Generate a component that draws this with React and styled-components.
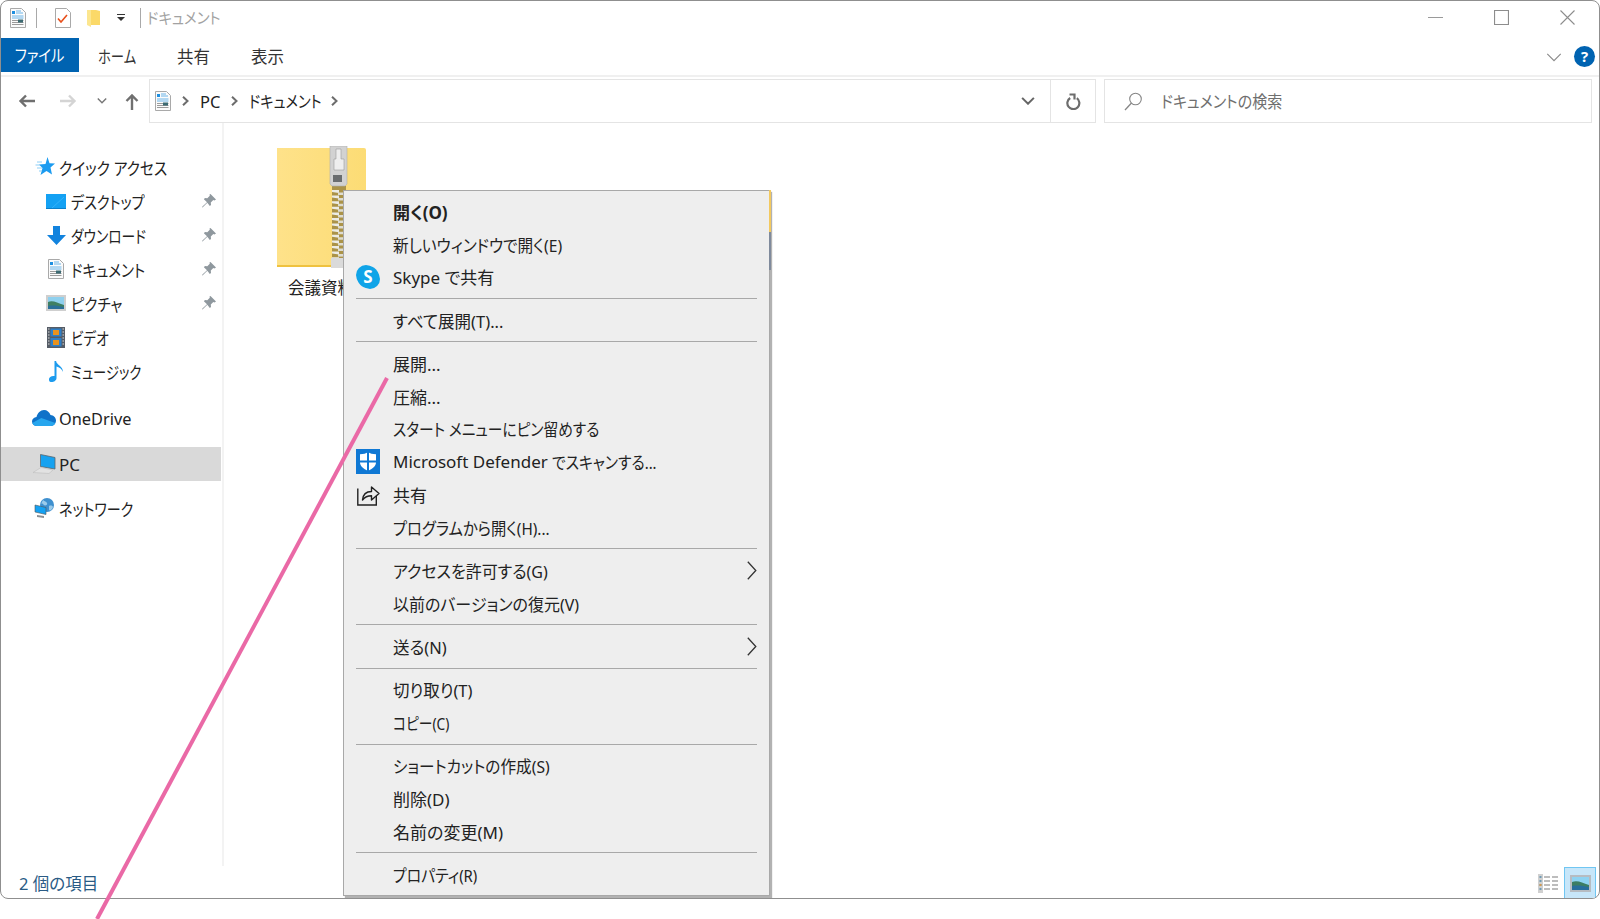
import React from "react";
import styled, { createGlobalStyle } from "styled-components";

const Global = createGlobalStyle`
  html, body { margin: 0; padding: 0; background: #fff; overflow: hidden; }
  body {
    font-family: "Noto Sans", "Noto Sans CJK JP", sans-serif;
    font-size: 17px;
    color: #222;
    font-feature-settings: "palt";
  }
  #root { width: 1600px; height: 919px; position: relative; overflow: hidden; }
`;

const Label = styled.span`
  display: inline-block; white-space: pre; flex: none;
  transform: scaleX(${p => p.$sx || 1});
  transform-origin: ${p => p.$center ? "center" : "left"} center;
`;
const Win = styled.div`
  position: relative; box-sizing: border-box;
  width: 1600px; height: 899px;
  border: 1px solid #8f8f8f; border-radius: 8px;
  display: flex; flex-direction: column; overflow: hidden; background: #fff;
`;
const TitleBar = styled.div`
  height: 37px; flex: none; display: flex; align-items: center; padding: 0 0 4px 9px; box-sizing: border-box;
`;
const QuickIcon = styled.span`
  display: inline-flex; flex: none; margin-left: ${p => p.$ml || 0}px;
`;
const TitleSep = styled.span`
  flex: none; width: 1px; height: 20px; background: #a9a9a9; margin-left: ${p => p.$ml}px;
`;
const TitleText = styled.span`
  margin-left: 6px; color: #a2a2a2; font-size: 15.5px; display: inline-flex;
`;
const WinControls = styled.div`
  margin-left: auto; display: flex; align-items: center; gap: 51px; padding-right: 24px;
`;
const TabRow = styled.div`
  height: 34px; flex: none; display: flex; align-items: center; position: relative;
`;
const FileTab = styled.div`
  width: 78px; height: 34px; background: #0063b1; color: #fff; display: flex; align-items: center; justify-content: center; font-size: 16.5px;
`;
const Tab = styled.div`
  width: ${p => p.$w}px; box-sizing: border-box; padding-left: ${p => p.$pl || 20}px; color: #333; font-size: 16.5px; line-height: 34px; position: relative; top: 2px;
`;
const TabRight = styled.div`
  margin-left: auto; display: flex; align-items: center; gap: 12px; padding: 2px 4px 0 0;
`;
const TabChevron = styled.span`
  display: inline-flex; margin-top: 3px;
`;
const Help = styled.div`
  width: 21px; height: 21px; border-radius: 50%; background: #0063b1; color: #fff; font-size: 15px; font-weight: 700;
  display: flex; align-items: center; justify-content: center;
`;
const Rule = styled.div`
  height: 2px; flex: none; background: #f0f0f0; margin-top: 3px;
`;
const AddressRow = styled.div`
  height: 44px; flex: none; margin-top: 2px; display: flex; align-items: stretch; padding-right: 7px;
`;
const NavBtns = styled.div`
  width: 148px; flex: none; display: flex; align-items: center; position: relative;
`;
const NavIcon = styled.span`
  display: inline-flex; margin-left: ${p => p.$ml}px;
`;
const AddressBox = styled.div`
  width: 947px; box-sizing: border-box; flex: none; border: 1px solid #e4e4e4; display: flex; align-items: center;
`;
const Crumbs = styled.div`
  flex: 1; display: flex; align-items: center; padding-left: 5px; height: 100%;
`;
const CrumbGap = styled.span`
  width: 11px; flex: none;
`;
const Crumb = styled.span`
  width: ${p => p.$w}px; flex: none; margin: 0 11px; color: #222; font-size: 16.5px;
`;
const AddrBtn = styled.div`
  flex: none; width: ${p => p.$w}px; height: 100%; display: flex; align-items: center; justify-content: center;
  ${p => p.$line && "border-left: 1px solid #e4e4e4;"}
`;
const SearchBox = styled.div`
  flex: 1; margin-left: 8px; box-sizing: border-box; border: 1px solid #e4e4e4; display: flex; align-items: center; padding-left: 19px; gap: 18px;
  color: #6f6f6f; font-size: 16.5px;
`;
const Body = styled.div`
  flex: 1; display: flex; min-height: 0;
`;
const Side = styled.nav`
  width: 223px; flex: none; box-sizing: border-box; border-right: 2px solid #f3f3f3; padding-top: 27px;
`;
const SideRow = styled.div`
  height: 34px; width: 220px; box-sizing: border-box; display: flex; align-items: center;
  padding-left: ${p => p.$sub ? 45 : 31}px;
  margin-top: ${p => p.$mt || 0}px;
  background: ${p => p.$active ? "#d9d9d9" : "transparent"};
  font-size: 17px;
`;
const SideIcon = styled.span`
  width: ${p => p.$sub ? 20 : 24}px; flex: none; display: inline-flex; justify-content: center; align-items: center; margin-right: ${p => p.$sub ? 5 : 3}px;
`;
const Pin = styled.span`
  margin-left: auto; margin-right: 5px; display: inline-flex;
`;
const Files = styled.div`
  flex: 1; padding: 23px 0 0 53px; position: relative;
`;
const FileItem = styled.div`
  width: 89px; position: relative;
`;
const FileName = styled.div`
  margin-top: 8px; padding-left: 11px; font-size: 16.5px; color: #222; white-space: nowrap; line-height: 24px;
`;
const Status = styled.div`
  height: 32px; flex: none; display: flex; align-items: center; padding: 2px 3px 0 18px; box-sizing: border-box; color: #2a5b85; font-size: 16.5px; position: relative;
`;
const StatusRight = styled.div`
  margin-left: auto; display: flex; align-items: flex-end; gap: 6px; height: 100%;
`;
const ViewBtn = styled.div`
  width: 32px; height: 32px; box-sizing: border-box; background: #c7e6f9; border: 1px solid #70c6f2; border-bottom: 0;
  display: flex; align-items: center; justify-content: center; margin-bottom: -1px;
`;
const ListIcon = styled.span`
  display: inline-flex; margin-bottom: 5px;
`;
const Menu = styled.div`
  position: absolute; left: 342px; top: 189px; width: 427px; box-sizing: border-box;
  background: #eeeeee; border: 1px solid #a8a8a8; padding: 4px 0 4px;
  box-shadow: 2px 2px 1px rgba(0,0,0,0.3); z-index: 2;
  &::after {
    content: ""; position: absolute; left: 100%; top: -1px; width: 2px; height: 80px;
    background: linear-gradient(#f3c95f 0 53%, #7f8a9c 53%);
  }
`;
const MenuRow = styled.div`
  height: 32.8px; display: flex; align-items: center; padding: 0 12px;
  font-weight: ${p => p.$bold ? 700 : 400}; font-size: 17px; color: #222;
`;
const MenuIcon = styled.span`
  width: 24px; flex: none; display: inline-flex; justify-content: center; align-items: center; margin-right: 13px; height: 26px;
`;
const Sub = styled.span`
  margin-left: auto; display: inline-flex;
`;
const MenuSep = styled.div`
  height: 1px; background: #a8a8a8; margin: 4.7px 12px;
`;
const SkypeS = styled.span`
  width: 22px; height: 22px; border-radius: 50%; background: #10a4e8; color: #fff; font-weight: 700; font-size: 17px;
  display: flex; align-items: center; justify-content: center; box-shadow: -2px -2px 0 -1px #10a4e8, 2px 2px 0 -1px #10a4e8;
`;
const Overlay = styled.svg`
  position: absolute; left: 0; top: 0; pointer-events: none; z-index: 5;
`;

const Doc = ({ s = 20 }) => (
  <svg width={s * 0.8} height={s} viewBox="0 0 16 20">
    <path d="M.5.5h11l4 4v15H.5z" fill="#fbfbfb" stroke="#a9a9a9" />
    <path d="M2 3h3v3H2z" fill="#1e8fe0" />
    <path d="M6 3h5M6 5h7M2 8h11.500M2 10h11.500" stroke="#6ab4e8" />
    <path d="M2 12.500h11.500M2 14.500h11.500M2 16.500h11.500" stroke="#9a9a9a" />
    <path d="M8 11.500h5v3H8z" fill="#3b6a72" />
  </svg>
);
const CheckDoc = () => (
  <svg width="16" height="20" viewBox="0 0 16 20">
    <path d="M.5.5h11l4 4v15H.5z" fill="#fff" stroke="#a9a9a9" />
    <path d="M3 10.500l3 3.500 6-7" fill="none" stroke="#e8501c" strokeWidth="1.600" />
  </svg>
);
const SmallFolder = () => (
  <svg width="14" height="20" viewBox="0 0 14 20">
    <path d="M0 2h9l4 1v14H0z" fill="#fbd968" />
    <path d="M0 2h4v17l-4-2z" fill="#fce68f" />
  </svg>
);
const DropMark = () => (
  <svg width="8" height="8" viewBox="0 0 8 8">
    <path d="M0 0h8v1H0zM0 3h8L4 7z" fill="#333" />
  </svg>
);
const Close = () => (
  <svg width="15" height="15" viewBox="0 0 15 15"><path d="M.5.5l14 14M14.500.5l-14 14" stroke="#8d8d8d" strokeWidth="1.100" /></svg>
);
const Max = () => (
  <svg width="15" height="15" viewBox="0 0 15 15"><path d="M.5.5h14v14H.5z" fill="none" stroke="#8d8d8d" strokeWidth="1.200" /></svg>
);
const Min = () => (
  <svg width="15" height="15" viewBox="0 0 15 15"><path d="M0 7.500h15" stroke="#9a9a9a" strokeWidth="1.200" /></svg>
);
const Chev = ({ c = "#8a8a8a", w = 1.2, s = 16 }) => (
  <svg width={s} height={s * 0.6} viewBox="0 0 16 10"><path d="M1 1l7 7 7-7" fill="none" stroke={c} strokeWidth={w} /></svg>
);
const ArrowLeft = ({ c }) => (
  <svg width="17" height="14" viewBox="0 0 17 14"><path d="M17 7H3M8 1.500L2.500 7 8 12.500" fill="none" stroke={c} strokeWidth="2.400" /></svg>
);
const ArrowRight = ({ c }) => (
  <svg width="17" height="14" viewBox="0 0 17 14"><path d="M0 7h14M9 1.500L14.500 7 9 12.500" fill="none" stroke={c} strokeWidth="2.400" /></svg>
);
const ArrowUp = () => (
  <svg width="14" height="17" viewBox="0 0 14 17"><path d="M7 17V3M1.500 8L7 2.500 12.500 8" fill="none" stroke="#707070" strokeWidth="2.400" /></svg>
);
const Crumbsep = () => (
  <svg width="7" height="10" viewBox="0 0 7 10" style={{ flex: "none" }}><path d="M1 .8L5.500 5 1 9.200" fill="none" stroke="#6d6d6d" strokeWidth="2" /></svg>
);
const Refresh = () => (
  <svg width="15" height="17" viewBox="0 0 15 17">
    <path d="M10.800 5.200A6 6 0 1 1 4.200 5" fill="none" stroke="#6d6d6d" strokeWidth="2.200" />
    <path d="M3.500 1.500h5v5" fill="none" stroke="#6d6d6d" strokeWidth="2.200" />
  </svg>
);
const Magnify = () => (
  <svg width="19" height="19" viewBox="0 0 19 19">
    <circle cx="11.500" cy="7" r="5.800" fill="none" stroke="#868686" strokeWidth="1.100" />
    <path d="M7.500 11L1 18" stroke="#868686" strokeWidth="1.300" />
  </svg>
);
const Star = () => (
  <svg width="21" height="20" viewBox="0 0 21 20">
    <path d="M13.500 0l2 6.300 5.500.3-4.500 4 1.500 7-5.500-3.500-6 3.800 2-7-3.500-3.500 6.500-.3z" fill="#1b9bf0" />
    <path d="M3 5h5M1.500 8H6M3 11h5M5 14h3" stroke="#8ed0f7" strokeWidth="1.200" />
  </svg>
);
const Desktop = () => (
  <svg width="20" height="15" viewBox="0 0 20 15">
    <path d="M0 0h20v14H0z" fill="#14a1f3" />
    <path d="M0 14h20v1H0z" fill="#0b7fca" />
    <path d="M6 14L18 3" stroke="#36b2f7" />
  </svg>
);
const Download = () => (
  <svg width="19" height="19" viewBox="0 0 19 19">
    <path d="M6 0h7v9h6l-9.500 10L0 9h6z" fill="#1283de" />
  </svg>
);
const Picture = () => (
  <svg width="20" height="16" viewBox="0 0 20 16">
    <path d="M0 0h20v16H0z" fill="#cfcfcf" />
    <path d="M2 2h16v12H2z" fill="#8fd0ee" />
    <path d="M2 7c5-2 9 1 16 3v4H2z" fill="#3f7f63" />
    <path d="M2 11c6-1 10 0 16 1v2H2z" fill="#2a6f99" />
  </svg>
);
const Film = () => (
  <svg width="18" height="21" viewBox="0 0 18 21">
    <path d="M0 0h18v21H0z" fill="#555c66" />
    <path d="M3.500 1.500h11v8h-11z" fill="#2d7fc8" />
    <path d="M3.500 11h11v8.500h-11z" fill="#2d7fc8" />
    <path d="M6 3h6v5H6z M6 13h6v5H6z" fill="#e8921f" />
    <path d="M1 2h1.500M1 5h1.500M1 8h1.500M1 11h1.500M1 14h1.500M1 17h1.500M15.500 2H17M15.500 5H17M15.500 8H17M15.500 11H17M15.500 14H17M15.500 17H17" stroke="#d8d8d8" />
  </svg>
);
const Note = () => (
  <svg width="14" height="21" viewBox="0 0 14 21">
    <path d="M5.500 0h1.600c.4 4 6.900 5 6.900 11-1-3-4-5-6.500-5.500V17c0 2.500-2.500 4-5 4S0 19.500 0 18c0-2 2.500-3.500 5.500-3z" fill="#1c9bee" />
  </svg>
);
const Cloud = () => (
  <svg width="24" height="16" viewBox="0 0 24 16">
    <path d="M5 16C2 16 0 14 0 11.500S2 7.200 4.500 7C5.500 3 8.500 0 12 0c3 0 5.500 2 6.500 5 3 .3 5.500 2.500 5.500 5.500S21.500 16 19 16z" fill="#0f72c9" />
    <path d="M5 16c-2.500 0-4-1-4.700-3l9-5 14 5c-.7 2-2.500 3-4.300 3z" fill="#27a6ee" />
  </svg>
);
const Laptop = () => (
  <svg width="23" height="20" viewBox="0 0 23 20">
    <path d="M7.500 0.500l14.500 3v11.500L7.500 12.500z" fill="#17a2f0" stroke="#5c666c" strokeWidth=".8" />
    <path d="M0 18.500l8-5 12 2.500-4 3.500z" fill="#e2e2e2" stroke="#bdbdbd" strokeWidth=".6" />
  </svg>
);
const Globe = () => (
  <svg width="21" height="20" viewBox="0 0 21 20">
    <circle cx="13" cy="7" r="7" fill="#3f90cf" />
    <path d="M9 2c2 2 3 1 4 3s-2 3-3 2-2-2-3-1zM15 8c2-1 4 0 4 1-1 3-3 4-4 3z" fill="#9ccbea" />
    <path d="M1 7l11 2.500v7l-11-2.500z" fill="#14a1f3" stroke="#555" strokeWidth=".6" />
    <path d="M3 17l7 1v2l-7-1z" fill="#8a8f94" />
  </svg>
);
const PinI = () => (
  <svg width="14" height="14" viewBox="0 0 14 14">
    <path d="M8.500 0L14 5.500l-1.500 1-1.200-.4-2.500 2.500.2 2.400-1.200 1L5.300 8.700 1 13l-1 .8.400-1.200L5 8.200 1.900 5.300l1-1.200 2.400.2 2.500-2.500-.3-1.200z" fill="#8f989e" />
  </svg>
);
const Shield = () => (
  <svg width="24" height="25" viewBox="0 0 24 25">
    <path d="M0 0h24v25H0z" fill="#0f78d4" />
    <path d="M12 3c2 1.500 4.500 2.200 8 2.300v8c0 4-3.500 6.500-8 8.700-4.500-2.200-8-4.700-8-8.700v-8C7.500 5.200 10 4.500 12 3z" fill="#fff" />
    <path d="M11 3h2v19h-2zM4 11.500h16v2H4z" fill="#0f78d4" />
  </svg>
);
const Share = () => (
  <svg width="23" height="22" viewBox="0 0 23 22">
    <path d="M.8 4.500v16.500h18.500V12" fill="none" stroke="#222" strokeWidth="1.400" />
    <path d="M5.500 16c.5-5.500 4-8.500 9-8.500V3L22 9.500 14.500 16v-4.200c-4 0-6.500 1-9 4.200z" fill="none" stroke="#222" strokeWidth="1.400" strokeLinejoin="round" />
  </svg>
);
const SubArrow = () => (
  <svg width="10" height="19" viewBox="0 0 10 19"><path d="M.8.800l8 8.700-8 8.700" fill="none" stroke="#333" strokeWidth="1.300" /></svg>
);
const Details = () => (
  <svg width="20" height="19" viewBox="0 0 20 19">
    <path d="M0 0h5v19H0z" fill="#d0d0d0" />
    <path d="M1.500 2h2v2h-2zM1.500 6h2v2h-2zM1.500 10h2v2h-2zM1.500 14h2v2h-2z" fill="#6e9ab5" />
    <path d="M1.500 10h2v2h-2z" fill="#d99a4a" />
    <path d="M6 3h6M14 3h6M6 7h6M14 7h6M6 11h6M14 11h6M6 15h6M14 15h6" stroke="#a8a8a8" strokeWidth="1.400" />
  </svg>
);
const LargeIcons = () => (
  <svg width="21" height="17" viewBox="0 0 21 17">
    <path d="M0 0h21v17H0z" fill="#b6bcc2" />
    <path d="M2 2h17v13H2z" fill="#8ed3f2" />
    <path d="M2 7c6-2 10 1 17 3v5H2z" fill="#3c7d63" />
    <path d="M2 11c6-1 11 0 17 1v3H2z" fill="#286e9c" />
  </svg>
);
const Teeth = () => {
  const r = [];
  for (let i = 0; i < 14; i++) {
    r.push(<path key={"a" + i} d={`M55 ${44 + i * 5.600}h7v3l-7 -1z`} fill="#ecece6" />);
    r.push(<path key={"b" + i} d={`M61 ${46.500 + i * 5.600}h8v2.500h-8z`} fill="#dedcd0" />);
  }
  return r;
};
const Zip = () => (
  <svg width="89" height="122" viewBox="0 0 89 122" style={{ display: "block" }}>
    <defs>
      <linearGradient id="fg" x1="0" y1="0" x2="1" y2="0">
        <stop offset="0" stopColor="#fee28a" />
        <stop offset="1" stopColor="#fcdc75" />
      </linearGradient>
    </defs>
    <path d="M0 2h87a2 2 0 0 1 2 2v117H0z" fill="url(#fg)" />
    <path d="M0 119h89v2H0z" fill="#efc23f" />
    <path d="M55 40h14v81H55z" fill="#ab9348" />
    <Teeth />
    <path d="M53 0h17v38l-2 2H55l-2-2z" fill="#d2d2d2" stroke="#b0b0b0" strokeWidth=".6" />
    <path d="M59 3h5v10h3v11h-10V13h2z" fill="#eeeeee" stroke="#9a9a9a" strokeWidth=".6" />
    <path d="M56 29h9v7h-9z" fill="#6a6d6f" />
    <path d="M54 112h15v10H54z" fill="#dadada" />
  </svg>
);

const quick = [
  ["デスクトップ", .83, <Desktop />], ["ダウンロード", .81, <Download />], ["ドキュメント", .855, <Doc />], ["ピクチャ", .85, <Picture />],
];

export default function App() {
  return (
    <>
      <Global />
      <Win>
        <TitleBar>
          <QuickIcon><Doc /></QuickIcon>
          <TitleSep $ml={10} />
          <QuickIcon $ml={18}><CheckDoc /></QuickIcon>
          <QuickIcon $ml={16}><SmallFolder /></QuickIcon>
          <QuickIcon $ml={16}><DropMark /></QuickIcon>
          <TitleSep $ml={15} />
          <TitleText><Label $sx={.93}>ドキュメント</Label></TitleText>
          <WinControls><Min /><Max /><Close /></WinControls>
        </TitleBar>
        <TabRow>
          <FileTab><Label $sx={.87} $center>ファイル</Label></FileTab>
          <Tab $w={78} $pl={19}><Label $sx={.81}>ホーム</Label></Tab>
          <Tab $w={74}>共有</Tab>
          <Tab $w={74}>表示</Tab>
          <TabRight><TabChevron><Chev /></TabChevron><Help>?</Help></TabRight>
        </TabRow>
        <Rule />
        <AddressRow>
          <NavBtns>
            <NavIcon $ml={17}><ArrowLeft c="#6f6f6f" /></NavIcon>
            <NavIcon $ml={25}><ArrowRight c="#d4d4d4" /></NavIcon>
            <NavIcon $ml={20}><Chev c="#777" w={2.4} s={10} /></NavIcon>
            <NavIcon $ml={18}><ArrowUp /></NavIcon>
          </NavBtns>
          <AddressBox>
            <Crumbs>
              <Doc />
              <CrumbGap />
              <Crumbsep />
              <Crumb $w={20}>PC</Crumb>
              <Crumbsep />
              <Crumb $w={71}><Label $sx={.86}>ドキュメント</Label></Crumb>
              <Crumbsep />
            </Crumbs>
            <AddrBtn $w={44}><Chev c="#666" w={2.4} s={14} /></AddrBtn>
            <AddrBtn $w={44} $line><Refresh /></AddrBtn>
          </AddressBox>
          <SearchBox><Magnify /><Label $sx={.91}>ドキュメントの検索</Label></SearchBox>
        </AddressRow>
        <Body>
          <Side>
            <SideRow><SideIcon><Star /></SideIcon><Label $sx={.865}>クイック アクセス</Label></SideRow>
            {quick.map(([t, sx, i]) => (
              <SideRow $sub key={t}><SideIcon $sub>{i}</SideIcon><Label $sx={sx}>{t}</Label><Pin><PinI /></Pin></SideRow>
            ))}
            <SideRow $sub><SideIcon $sub><Film /></SideIcon><Label $sx={.8}>ビデオ</Label></SideRow>
            <SideRow $sub><SideIcon $sub><Note /></SideIcon><Label $sx={.78}>ミュージック</Label></SideRow>
            <SideRow $mt={13}><SideIcon><Cloud /></SideIcon><Label $sx={.96}>OneDrive</Label></SideRow>
            <SideRow $mt={12} $active><SideIcon><Laptop /></SideIcon>PC</SideRow>
            <SideRow $mt={10}><SideIcon><Globe /></SideIcon><Label $sx={.825}>ネットワーク</Label></SideRow>
          </Side>
          <Files>
            <FileItem>
              <Zip />
              <FileName>会議資料</FileName>
            </FileItem>
          </Files>
        </Body>
        <Status>
          2 個の項目
          <StatusRight>
            <ListIcon><Details /></ListIcon>
            <ViewBtn><LargeIcons /></ViewBtn>
          </StatusRight>
        </Status>
        <Menu>
          <MenuRow $bold><MenuIcon />開く(O)</MenuRow>
          <MenuRow><MenuIcon /><Label $sx={.92}>新しいウィンドウで開く(E)</Label></MenuRow>
          <MenuRow><MenuIcon><SkypeS>S</SkypeS></MenuIcon>Skype で共有</MenuRow>
          <MenuSep />
          <MenuRow><MenuIcon /><Label $sx={.97}>すべて展開(T)...</Label></MenuRow>
          <MenuSep />
          <MenuRow><MenuIcon />展開...</MenuRow>
          <MenuRow><MenuIcon />圧縮...</MenuRow>
          <MenuRow><MenuIcon /><Label $sx={.868}>スタート メニューにピン留めする</Label></MenuRow>
          <MenuRow><MenuIcon><Shield /></MenuIcon><Label>Microsoft Defender </Label><Label $sx={.87}>でスキャンする...</Label></MenuRow>
          <MenuRow><MenuIcon><Share /></MenuIcon>共有</MenuRow>
          <MenuRow><MenuIcon /><Label $sx={.9}>プログラムから開く(H)...</Label></MenuRow>
          <MenuSep />
          <MenuRow><MenuIcon /><Label $sx={.94}>アクセスを許可する(G)</Label><Sub><SubArrow /></Sub></MenuRow>
          <MenuRow><MenuIcon /><Label $sx={.94}>以前のバージョンの復元(V)</Label></MenuRow>
          <MenuSep />
          <MenuRow><MenuIcon /><Label $sx={.97}>送る(N)</Label><Sub><SubArrow /></Sub></MenuRow>
          <MenuSep />
          <MenuRow><MenuIcon /><Label $sx={.97}>切り取り(T)</Label></MenuRow>
          <MenuRow><MenuIcon /><Label $sx={.81}>コピー(C)</Label></MenuRow>
          <MenuSep />
          <MenuRow><MenuIcon /><Label $sx={.92}>ショートカットの作成(S)</Label></MenuRow>
          <MenuRow><MenuIcon />削除(D)</MenuRow>
          <MenuRow><MenuIcon />名前の変更(M)</MenuRow>
          <MenuSep />
          <MenuRow><MenuIcon /><Label $sx={.873}>プロパティ(R)</Label></MenuRow>
        </Menu>
      </Win>
      <Overlay width="1600" height="919" viewBox="0 0 1600 919">
        <path d="M387 378L97 919" stroke="#ea69a6" strokeWidth="4" fill="none" />
      </Overlay>
    </>
  );
}
